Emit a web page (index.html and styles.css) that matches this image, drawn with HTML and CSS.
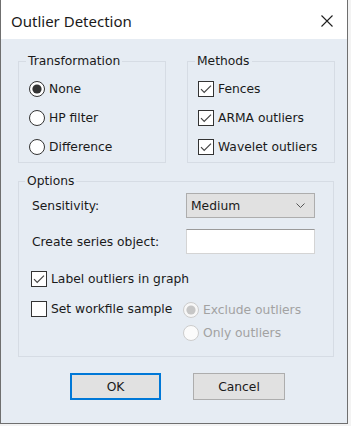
FILE: index.html
```html
<!DOCTYPE html>
<html lang="en">
<head>
<meta charset="UTF-8">
<title>Outlier Detection</title>
<link rel="stylesheet" href="styles.css">
</head>
<body>
<div class="window">
    <div class="titlebar">
        <span class="title">Outlier Detection</span>
        <svg class="close" width="12" height="12" viewBox="0 0 12 12">
            <path d="M0.5 0.5L11.5 11.5M11.5 0.5L0.5 11.5" stroke="#1f1f1f" stroke-width="1.1" fill="none"/>
        </svg>
    </div>

    <div class="content">
        <div class="top-row">
            <fieldset class="group group-transform">
                <legend>Transformation</legend>
                <div class="choice">
                    <svg class="mark" width="16" height="16" viewBox="0 0 16 16">
                        <circle cx="8" cy="8" r="7.5" fill="#fff" stroke="#333"/>
                        <circle cx="8" cy="8" r="4.6" fill="#333"/>
                    </svg>
                    <span>None</span>
                </div>
                <div class="choice">
                    <svg class="mark" width="16" height="16" viewBox="0 0 16 16">
                        <circle cx="8" cy="8" r="7.5" fill="#fff" stroke="#333"/>
                    </svg>
                    <span>HP filter</span>
                </div>
                <div class="choice">
                    <svg class="mark" width="16" height="16" viewBox="0 0 16 16">
                        <circle cx="8" cy="8" r="7.5" fill="#fff" stroke="#333"/>
                    </svg>
                    <span>Difference</span>
                </div>
            </fieldset>

            <fieldset class="group group-methods">
                <legend>Methods</legend>
                <div class="choice">
                    <svg class="mark" width="16" height="16" viewBox="0 0 16 16">
                        <rect x="0.5" y="0.5" width="15" height="15" fill="#fff" stroke="#333"/>
                        <path d="M3 8.2L6.2 11.4L13 4.6" stroke="#444" stroke-width="1.2" fill="none"/>
                    </svg>
                    <span>Fences</span>
                </div>
                <div class="choice">
                    <svg class="mark" width="16" height="16" viewBox="0 0 16 16">
                        <rect x="0.5" y="0.5" width="15" height="15" fill="#fff" stroke="#333"/>
                        <path d="M3 8.2L6.2 11.4L13 4.6" stroke="#444" stroke-width="1.2" fill="none"/>
                    </svg>
                    <span>ARMA outliers</span>
                </div>
                <div class="choice">
                    <svg class="mark" width="16" height="16" viewBox="0 0 16 16">
                        <rect x="0.5" y="0.5" width="15" height="15" fill="#fff" stroke="#333"/>
                        <path d="M3 8.2L6.2 11.4L13 4.6" stroke="#444" stroke-width="1.2" fill="none"/>
                    </svg>
                    <span>Wavelet outliers</span>
                </div>
            </fieldset>
        </div>

        <fieldset class="group group-options">
            <legend>Options</legend>
            <div class="form-row">
                <span class="form-label">Sensitivity:</span>
                <div class="select">
                    <span>Medium</span>
                    <svg width="9" height="5" viewBox="0 0 9 5">
                        <path d="M0.5 0.5L4.5 4.5L8.5 0.5" stroke="#555" fill="none"/>
                    </svg>
                </div>
            </div>
            <div class="form-row">
                <span class="form-label">Create series object:</span>
                <div class="text-input"></div>
            </div>

            <div class="choice choice-graph">
                <svg class="mark" width="16" height="16" viewBox="0 0 16 16">
                    <rect x="0.5" y="0.5" width="15" height="15" fill="#fff" stroke="#333"/>
                    <path d="M3 8.2L6.2 11.4L13 4.6" stroke="#444" stroke-width="1.2" fill="none"/>
                </svg>
                <span>Label outliers in graph</span>
            </div>

            <div class="sample-row">
                <div class="choice sample-check">
                    <svg class="mark" width="16" height="16" viewBox="0 0 16 16">
                        <rect x="0.5" y="0.5" width="15" height="15" fill="#fff" stroke="#333"/>
                    </svg>
                    <span>Set workfile sample</span>
                </div>
                <div class="sample-radios">
                    <div class="choice disabled">
                        <svg class="mark" width="16" height="16" viewBox="0 0 16 16">
                            <circle cx="8" cy="8" r="7.5" fill="#f7f7f7" stroke="#cccccc"/>
                            <circle cx="8" cy="8" r="4.6" fill="#c6c6c6"/>
                        </svg>
                        <span>Exclude outliers</span>
                    </div>
                    <div class="choice disabled">
                        <svg class="mark" width="16" height="16" viewBox="0 0 16 16">
                            <circle cx="8" cy="8" r="7.5" fill="#fbfbfb" stroke="#cccccc"/>
                        </svg>
                        <span>Only outliers</span>
                    </div>
                </div>
            </div>
        </fieldset>

        <div class="buttons">
            <div class="btn btn-default">OK</div>
            <div class="btn">Cancel</div>
        </div>
    </div>
</div>
</body>
</html>
```

FILE: styles.css
```css
/* Dialog window */
body {
    margin: 0;
    background: #f3f3f3;
    font-family: 'DejaVu Sans', sans-serif;
    font-size: 12.3px;
    color: #1a1a1a;
}

.window {
    width: 348px;
    height: 424px;
    box-sizing: border-box;
    border: 1px solid #6f6f6f;
    border-top: none;
    background: #e6ecf3;
}

.titlebar {
    height: 39px;
    background: #fff;
    display: flex;
    align-items: center;
    justify-content: space-between;
    padding: 0 14px 0 10px;
}

.title {
    font-family: 'Noto Sans', sans-serif;
    font-size: 15px;
    color: #1a1a1a;
    margin-top: 2px;
}

.close {
    margin-top: 3px;
}

.content {
    padding: 15px 0 0 17px;
}

/* Group boxes */
.top-row {
    display: flex;
    gap: 21px;
}

.group {
    margin: 0;
    border: 1px solid #d6dce4;
    padding: 6px 0 1px 10px;
    box-sizing: border-box;
}

.group legend {
    padding: 0 2px;
    margin-left: -3px;
    line-height: 14px;
}

.group-transform,
.group-methods {
    width: 148px;
}

.group-options {
    width: 316px;
    margin-top: 11px;
    padding: 5px 0 12px 13px;
}

.group-options legend {
    margin-left: -7px;
}

/* Radio buttons and check boxes */
.choice {
    height: 29px;
    display: flex;
    align-items: center;
    gap: 4px;
}

.mark {
    flex: none;
}

.choice-graph {
    height: 22px;
    margin-top: 14px;
    margin-left: -1px;
}

.sample-row {
    display: flex;
    margin-top: 8px;
}

.sample-check {
    height: 22px;
    width: 152px;
    margin-left: -1px;
}

.sample-radios .choice {
    height: 23px;
    gap: 4px;
}

.disabled {
    color: #a2a2a2;
}

/* Form rows */
.form-row {
    height: 25px;
    display: flex;
    align-items: center;
    margin-bottom: 11px;
}

.form-label {
    width: 154px;
}

.select {
    width: 129px;
    height: 25px;
    box-sizing: border-box;
    background: #e1e1e1;
    border: 1px solid #adadad;
    display: flex;
    align-items: center;
    justify-content: space-between;
    padding: 0 9px 0 4px;
}

.text-input {
    width: 129px;
    height: 25px;
    box-sizing: border-box;
    background: #fff;
    border: 1px solid #d4d4d4;
    border-top-color: #9a9a9a;
}

.form-row + .form-row {
    margin-bottom: 0;
}

/* Buttons */
.buttons {
    display: flex;
    gap: 32px;
    margin-top: 16px;
    padding-left: 52px;
}

.btn {
    width: 92px;
    height: 27px;
    box-sizing: border-box;
    background: #e1e1e1;
    border: 1px solid #adadad;
    display: flex;
    align-items: center;
    justify-content: center;
}

.btn-default {
    width: 91px;
    border: 2px solid #0078d7;
}
```
